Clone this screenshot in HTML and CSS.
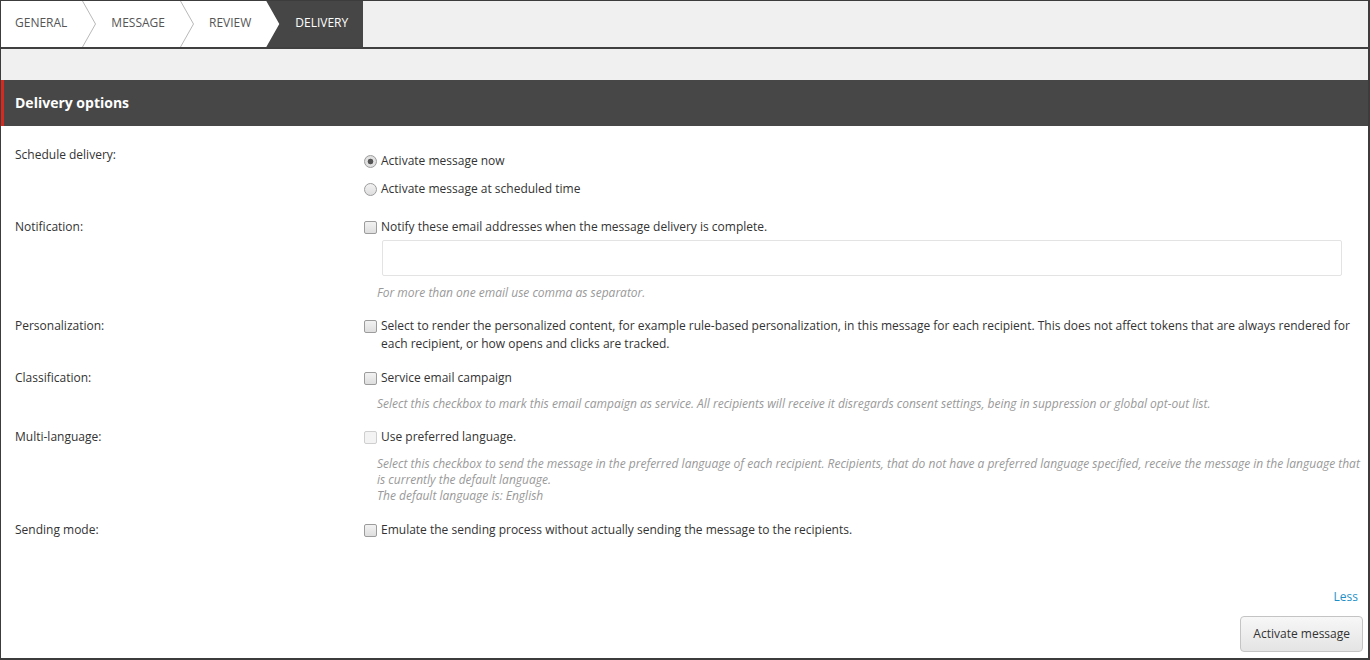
FILE: index.html
```html
<!DOCTYPE html>
<html lang="en">
<head>
    <meta charset="UTF-8">
    <meta name="viewport" content="width=device-width, initial-scale=1.0">
    <title>Delivery</title>
    <link rel="stylesheet" href="styles.css">
</head>
<body>
    <div class="frame">
        <div class="steps">
            <ul class="step-list">
                <li class="step step-first">General</li>
                <li class="step-sep"><svg width="14" height="46" viewBox="0 0 14 46"><polyline points="0.5,0 13.5,23 0.5,46" fill="none" stroke="#b8b8b8"/></svg></li>
                <li class="step">Message</li>
                <li class="step-sep"><svg width="14" height="46" viewBox="0 0 14 46"><polyline points="0.5,0 13.5,23 0.5,46" fill="none" stroke="#b8b8b8"/></svg></li>
                <li class="step">Review</li>
                <li class="step step-current">Delivery</li>
            </ul>
        </div>
        <div class="band"></div>
        <div class="section-title">Delivery options</div>

        <div class="form">
            <div class="row">
                <div class="row-label">Schedule delivery:</div>
                <div class="row-value radios">
                    <label class="choice"><input type="radio" name="when" checked><span>Activate message now</span></label>
                    <label class="choice"><input type="radio" name="when"><span>Activate message at scheduled time</span></label>
                </div>
            </div>

            <div class="row">
                <div class="row-label">Notification:</div>
                <div class="row-value">
                    <label class="choice"><input type="checkbox"><span>Notify these email addresses when the message delivery is complete.</span></label>
                    <input class="text-input" type="text">
                    <div class="help">For more than one email use comma as separator.</div>
                </div>
            </div>

            <div class="row">
                <div class="row-label">Personalization:</div>
                <div class="row-value">
                    <label class="choice"><input type="checkbox"><span>Select to render the personalized content, for example rule-based personalization, in this message for each recipient. This does not affect tokens that are always rendered for each recipient, or how opens and clicks are tracked.</span></label>
                </div>
            </div>

            <div class="row">
                <div class="row-label">Classification:</div>
                <div class="row-value">
                    <label class="choice"><input type="checkbox"><span>Service email campaign</span></label>
                    <div class="help">Select this checkbox to mark this email campaign as service. All recipients will receive it disregards consent settings, being in suppression or global opt-out list.</div>
                </div>
            </div>

            <div class="row row-wide">
                <div class="row-label">Multi-language:</div>
                <div class="row-value">
                    <label class="choice"><input type="checkbox" disabled><span>Use preferred language.</span></label>
                    <div class="help help-wide">Select this checkbox to send the message in the preferred language of each recipient. Recipients, that do not have a preferred language specified, receive the message in the language that is currently the default language.<br>The default language is: English</div>
                </div>
            </div>

            <div class="row">
                <div class="row-label">Sending mode:</div>
                <div class="row-value">
                    <label class="choice"><input type="checkbox"><span>Emulate the sending process without actually sending the message to the recipients.</span></label>
                </div>
            </div>
        </div>

        <div class="footer">
            <a class="less" href="#">Less</a>
            <button class="btn">Activate message</button>
        </div>
    </div>
</body>
</html>
```

FILE: styles.css
```css
* {
    box-sizing: border-box;
}
body {
    margin: 0;
    font-family: "Open Sans", "Liberation Sans", sans-serif;
    font-size: 12px;
    line-height: 18px;
    color: #333;
}
.frame {
    height: 660px;
    display: flex;
    flex-direction: column;
    border: 1px solid #3c3c3c;
    border-right-width: 2px;
    border-bottom-width: 2px;
    background: #fff;
}

/* wizard steps */
.steps {
    height: 48px;
    background: #f0f0f0;
    border-bottom: 2px solid #404040;
}
.step-list {
    display: flex;
    margin: 0;
    padding: 0;
    list-style: none;
    background: #fff;
    width: max-content;
    height: 46px;
}
.step {
    padding: 0 15px;
    line-height: 44px;
    text-transform: uppercase;
    color: #555;
}
.step-first {
    padding-left: 14px;
}
.step-sep {
    width: 14px;
    height: 46px;
}
.step-sep svg {
    display: block;
}
.step-current {
    padding: 0 15px 0 29px;
    background: #464646;
    color: #fff;
    clip-path: polygon(0 0, 100% 0, 100% 100%, 0 100%, 13px 50%);
}

.band {
    height: 31px;
    background: #f0f0f0;
}
.section-title {
    height: 46px;
    line-height: 46px;
    padding-left: 11px;
    background: #474747;
    border-left: 3px solid #d42a1f;
    color: #fff;
    font-size: 14px;
    font-weight: 700;
}

/* form rows */
.form {
    padding: 20px 8px 0 14px;
}
.row {
    display: flex;
    margin-bottom: 16px;
}
.row-wide {
    margin-bottom: 17px;
}
.row-label {
    width: 348px;
    flex: none;
}
.row-value {
    flex: 1;
}
.radios {
    padding-top: 6px;
    padding-bottom: 4px;
}
.radios .choice + .choice {
    margin-top: 10px;
}
.choice {
    display: flex;
    align-items: flex-start;
}
.choice input {
    appearance: none;
    -webkit-appearance: none;
    flex: none;
    width: 13px;
    height: 13px;
    margin: 3px 4px 0 1px;
    border: 1px solid #9c9c9c;
    border-radius: 2px;
    background: linear-gradient(#f2f2f2, #dedede);
}
.choice input[type="radio"] {
    border-radius: 50%;
}
.choice input[type="radio"]:checked {
    background: radial-gradient(circle, #555 0, #555 2.5px, #e4e4e4 3.2px, #d8d8d8 100%);
}
.choice input:disabled {
    border-color: #cfcfcf;
    background: #f3f3f3;
}
.text-input {
    display: block;
    width: calc(100% - 37px);
    height: 36px;
    margin: 4px 0 0 19px;
    border: 1px solid #e3e3e3;
    border-radius: 2px;
    font: inherit;
}
.help {
    margin: 9px 0 0 14px;
    font-style: italic;
    line-height: 16px;
    color: #999;
}
.help-wide {
    margin-top: 10px;
}

.footer {
    margin-top: auto;
    display: flex;
    flex-direction: column;
    align-items: flex-end;
    padding: 0 5px 6px 0;
}
.less {
    margin-right: 5px;
    color: #1e90c8;
    text-decoration: none;
}
.btn {
    margin-top: 10px;
    height: 36px;
    padding: 0 12px;
    border: 1px solid #c4c4c4;
    border-radius: 4px;
    background: linear-gradient(#f7f7f7, #e4e4e4);
    font: inherit;
    color: #333;
}
```
